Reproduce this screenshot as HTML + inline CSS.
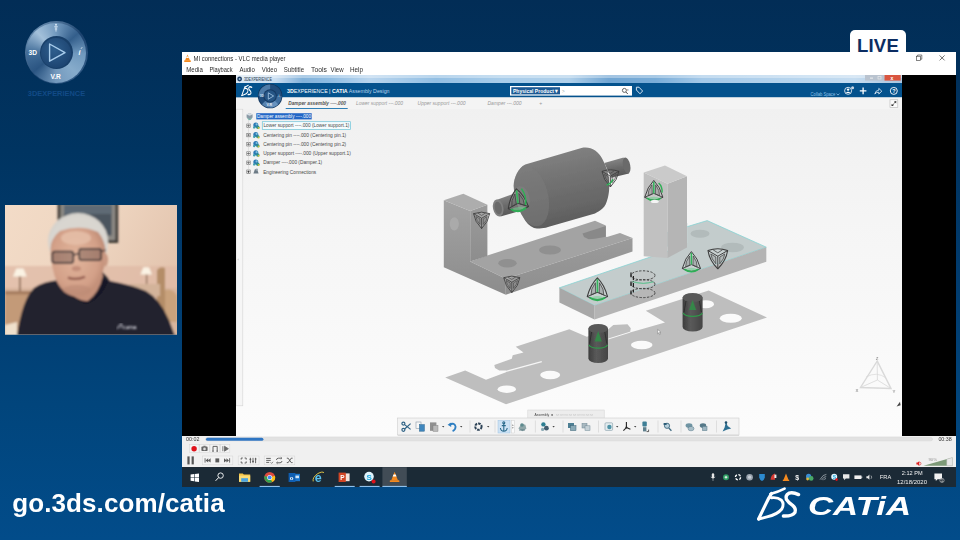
<!DOCTYPE html>
<html lang="en">
<head>
<meta charset="utf-8">
<title>CATIA Live - MI connections</title>
<style>
*{box-sizing:border-box;margin:0;padding:0}
html,body{width:960px;height:540px;overflow:hidden}
body{position:relative;font-family:"Liberation Sans",sans-serif;background:linear-gradient(180deg,#022d56 0%,#003461 28%,#013c6f 52%,#01457c 75%,#024c8a 100%)}
.abs{position:absolute}
#live{left:850px;top:30px;width:56px;height:34px;background:#fff;border-radius:5px 5px 0 0;color:#0c2d62;font-weight:bold;font-size:18.5px;line-height:32.4px;text-align:center;letter-spacing:0.2px}
#win{left:182px;top:52px;width:773.5px;height:435px;background:#000;overflow:hidden}
#url{left:12.2px;letter-spacing:0.1px;top:485.8px;color:#fff;font-weight:bold;font-size:26px;line-height:34px;white-space:nowrap}
</style>
</head>
<body>
<!-- LIVE badge -->
<div id="live" class="abs">LIVE</div>

<!-- VLC window -->
<div id="win" class="abs">
  <svg class="abs" style="left:0;top:0;filter:blur(0.3px)" width="774" height="23" viewBox="182 52 774 23" font-family="Liberation Sans, sans-serif">
    <rect x="182" y="52" width="774" height="23" fill="#fff"/>
    <path d="M187.5,54.4 l2.5,6 h-5 z" fill="#f58a1f"/><path d="M186.7,56.6 h1.6 l0.6,1.5 h-2.8 z" fill="#fff"/><rect x="184.2" y="60.2" width="6.6" height="1.7" rx="0.5" fill="#f58a1f"/>
    <text x="193.5" y="61" font-size="6.6" fill="#2c2c2c" textLength="92" lengthAdjust="spacingAndGlyphs">MI connections - VLC media player</text>
    <g font-size="6.5" fill="#2c2c2c">
      <text x="186.2" y="71.6" textLength="16.6" lengthAdjust="spacingAndGlyphs">Media</text>
      <text x="209.4" y="71.6" textLength="23.2" lengthAdjust="spacingAndGlyphs">Playback</text>
      <text x="239.4" y="71.6" textLength="15.4" lengthAdjust="spacingAndGlyphs">Audio</text>
      <text x="261.8" y="71.6" textLength="15.2" lengthAdjust="spacingAndGlyphs">Video</text>
      <text x="283.7" y="71.6" textLength="20.4" lengthAdjust="spacingAndGlyphs">Subtitle</text>
      <text x="311" y="71.6" textLength="15.8" lengthAdjust="spacingAndGlyphs">Tools</text>
      <text x="330.6" y="71.6" textLength="13" lengthAdjust="spacingAndGlyphs">View</text>
      <text x="350" y="71.6" textLength="13" lengthAdjust="spacingAndGlyphs">Help</text>
    </g>
    <rect x="916.4" y="56.2" width="4.2" height="4.2" fill="none" stroke="#333" stroke-width="0.6"/><path d="M917.6,56.2 v-1.2 h4.2 v4.2 h-1.2" fill="none" stroke="#333" stroke-width="0.6"/>
    <path d="M939.6,55.4 l5,5 M944.6,55.4 l-5,5" stroke="#333" stroke-width="0.7"/>
  </svg>
  <svg class="abs" style="left:54px;top:23px;filter:blur(0.4px)" width="666" height="361" viewBox="236 75 666 361" font-family="Liberation Sans, sans-serif">
    <defs>
      <linearGradient id="vbg" x1="0" y1="0" x2="0" y2="1"><stop offset="0" stop-color="#efefef"/><stop offset="0.4" stop-color="#f5f5f5"/><stop offset="1" stop-color="#fcfcfc"/></linearGradient>
      <linearGradient id="glass" x1="0" y1="0" x2="1" y2="0"><stop offset="0" stop-color="#dbe8f4"/><stop offset="0.06" stop-color="#c9ddf0"/><stop offset="0.1" stop-color="#82b2da"/><stop offset="0.14" stop-color="#8ebce2"/><stop offset="0.2" stop-color="#b9d5ee"/><stop offset="0.3" stop-color="#93bfe3"/><stop offset="0.4" stop-color="#a9cdea"/><stop offset="0.5" stop-color="#b0d0ea"/><stop offset="0.56" stop-color="#72a6d3"/><stop offset="0.63" stop-color="#7aadd8"/><stop offset="0.7" stop-color="#a5c9e8"/><stop offset="0.85" stop-color="#b9d6ee"/><stop offset="0.93" stop-color="#c5dcf0"/><stop offset="1" stop-color="#a9c5de"/></linearGradient>
      <linearGradient id="body" x1="0.35" y1="0" x2="0.6" y2="1"><stop offset="0" stop-color="#848484"/><stop offset="0.35" stop-color="#747474"/><stop offset="0.75" stop-color="#666"/><stop offset="1" stop-color="#595959"/></linearGradient>
      <linearGradient id="shaft" x1="0.3" y1="0" x2="0.5" y2="1"><stop offset="0" stop-color="#8a8a8a"/><stop offset="0.5" stop-color="#6c6c6c"/><stop offset="1" stop-color="#555"/></linearGradient>
      <linearGradient id="pin" x1="0" y1="0" x2="1" y2="0"><stop offset="0" stop-color="#3c3c3c"/><stop offset="0.4" stop-color="#5a5a5a"/><stop offset="1" stop-color="#444"/></linearGradient>
      <linearGradient id="lsA" x1="0" y1="0" x2="0" y2="1"><stop offset="0" stop-color="#a3a3a3"/><stop offset="1" stop-color="#8c8c8c"/></linearGradient><linearGradient id="lsB" x1="0" y1="0" x2="0" y2="1"><stop offset="0" stop-color="#9b9b9b"/><stop offset="1" stop-color="#8d8d8d"/></linearGradient><linearGradient id="lsC" x1="0" y1="0" x2="0" y2="1"><stop offset="0" stop-color="#9b9b9b"/><stop offset="1" stop-color="#8e8e8e"/></linearGradient><clipPath id="bodyclip"><path d="M513.7,185.7 C514,178 518,168 525.2,164.6 L581.4,147.9 C590,146 598,150 602.5,159.3 C606,166 608.5,172 608.7,178.7 C609.5,186 609.5,192 607.8,198 C606.5,203 605,206.5 602.5,208.6 C600,211 598,212 595,213.5 L548,227 C543,228.6 539,228.8 534,227.9 C529.5,226 526,222.5 523.4,217.4 C518,209 514,197 513.7,185.7 Z"/></clipPath><filter id="soft" x="-5%" y="-5%" width="110%" height="110%"><feGaussianBlur stdDeviation="0.45"/></filter>
    </defs>
    <!-- viewport -->
    <rect x="236" y="75" width="666" height="361" fill="url(#vbg)"/>
    <!-- scene -->
    <g filter="url(#soft)">
      <!-- ground shadow -->
      <polygon fill="#bebebe" points="445.2,377.5 465.2,370.5 486,379.7 506,372.2 506,370.4 499.3,370.4 495,368 494.3,365 511.8,358.7 512.7,355.3 523.5,352.5 515.7,346.7 569.3,329.2 586.8,336.7 607.5,330 613.3,325 627.5,324.2 630.8,328.3 630,332.5 665,322.5 645.8,310.8 708.7,290.5 767,317.5 506,404.2"/>
      <line x1="506" y1="371.3" x2="541.8" y2="361.6" stroke="#f6f6f6" stroke-width="1.2"/>
      <line x1="608.3" y1="339" x2="630" y2="332.2" stroke="#f6f6f6" stroke-width="1"/>
      <ellipse cx="506.8" cy="389.2" rx="9.2" ry="3.7" fill="#fafafa"/>
      <ellipse cx="550.2" cy="375" rx="10" ry="4.2" fill="#fafafa"/>
      <ellipse cx="641.7" cy="345" rx="10.8" ry="4.2" fill="#fafafa"/>
      <ellipse cx="730.8" cy="318.3" rx="11" ry="4.5" fill="#fafafa"/>
      <ellipse cx="705.8" cy="304.2" rx="8.2" ry="4" fill="#fafafa"/>

      <!-- lower support -->
      <polygon fill="#a3a3a3" points="470.2,261.5 505.8,278.7 632.5,237.9 620,232.9 607,237 605.8,236.7 605.8,225.6 595,220.7 487.4,255.5"/>
      <polygon fill="#898989" points="582.5,233.5 605.8,226 605.8,236.7 595,238.7 588.7,239.2 584,237"/>
      <polygon fill="url(#lsC)" points="505.8,278.7 632.5,237.9 632.5,251.5 505.8,294.8"/>
      <polygon fill="url(#lsA)" points="443.8,200.2 470.2,211 470.2,261.5 505.8,278.7 505.8,294.8 443.8,267.3"/>
      <polygon fill="url(#lsB)" points="470.2,211 487.4,204.8 487.4,256 470.2,261.5"/>
      <polygon fill="#adadad" points="443.8,200.2 463.3,193.8 487.4,204.8 470.2,211"/>
      <ellipse cx="454.3" cy="223.8" rx="4.6" ry="6.6" fill="#aaaaaa"/>
      <ellipse cx="507.5" cy="263.3" rx="9.2" ry="4.2" fill="#909090"/>
      <ellipse cx="550" cy="250" rx="11" ry="4.6" fill="#909090"/>

      <!-- damper -->
      <polygon fill="url(#shaft)" points="497,199.8 516.4,192.8 525.2,209.5 500.5,216.5"/>
      <ellipse cx="498.2" cy="208" rx="5.2" ry="8.6" fill="#808080" transform="rotate(-12 498.2 208)"/>
      <ellipse cx="498.2" cy="208" rx="3.6" ry="6.4" fill="#6b6b6b" transform="rotate(-12 498.2 208)"/>
      <polygon fill="url(#shaft)" points="604.3,162.9 623.6,157.6 628.9,173.4 611.3,177.8"/>
      <ellipse cx="626.6" cy="165.5" rx="3.6" ry="8.1" fill="#6a6a6a" transform="rotate(-12 626.6 165.5)"/>
      <path fill="url(#body)" d="M513.7,185.7 C514,178 518,168 525.2,164.6 L581.4,147.9 C590,146 598,150 602.5,159.3 C606,166 608.5,172 608.7,178.7 C609.5,186 609.5,192 607.8,198 C606.5,203 605,206.5 602.5,208.6 C600,211 598,212 595,213.5 L548,227 C543,228.6 539,228.8 534,227.9 C529.5,226 526,222.5 523.4,217.4 C518,209 514,197 513.7,185.7 Z"/>
      <g clip-path="url(#bodyclip)"><ellipse cx="531" cy="196" rx="17" ry="31" fill="#7c7c7c" opacity="0.5" transform="rotate(-14 531 196)"/><ellipse cx="522" cy="198" rx="7.5" ry="12" fill="#838383" opacity="0.5" transform="rotate(-14 522 198)"/></g>

      <!-- upper support -->
      <polygon fill="#c3cccc" stroke="#86d3d3" stroke-width="0.8" points="559.4,287.8 674,249 650,238 707.2,220.6 766.3,247.2 594.5,305.5"/>
      <polygon fill="#b4b4b4" points="594.5,305.5 766.3,247.2 766.3,261.8 594.5,319.5"/>
      <polygon fill="#a8a8a8" points="559.4,287.8 594.5,305.5 594.5,319.5 559.4,302.6"/>
      <ellipse cx="700" cy="233.7" rx="9.5" ry="4" fill="#b2bbbb"/>
      <ellipse cx="732.5" cy="247.5" rx="11.5" ry="4.8" fill="#b2bbbb"/>
      <polygon fill="#c9d9d8" opacity="0.7" points="667.5,230 687.5,223 687.5,243 667.5,250"/>
      <polygon fill="#c1c1c1" points="643.7,172.5 667.5,183.7 667.5,258 643.7,256.2"/>
      <polygon fill="#b5b5b5" points="667.5,183.7 687,176.2 687,247.5 667.5,258"/>
      <polygon fill="#cacaca" points="643.7,172.5 665,165.5 687,176.2 667.5,183.7"/>

      <!-- centering pins -->
      <path fill="url(#pin)" d="M682.6,297.6 L682.6,327 A10,4.6 0 0 0 702.6,327 L702.6,297.6 Z"/>
      <ellipse cx="692.6" cy="297.6" rx="10" ry="4.6" fill="#585858"/>
      <path d="M683,313 A10,4.4 0 0 0 702.4,313" fill="none" stroke="#2f9a4a" stroke-width="1.3"/>
      <path d="M692.6,300 l-3.6,10 h7.2 z" fill="#2f8f46" opacity="0.85"/>
      <path d="M686,301 l-2,11 M699.4,301 l2,11" stroke="#2a2a2a" stroke-width="0.8"/>
      <path fill="url(#pin)" d="M588.4,328.6 L588.4,358.4 A9.8,4.6 0 0 0 608,358.4 L608,328.6 Z"/>
      <ellipse cx="598.2" cy="328.6" rx="9.8" ry="4.6" fill="#585858"/>
      <path d="M588.8,345 A9.8,4.4 0 0 0 607.6,345" fill="none" stroke="#2f9a4a" stroke-width="1.3"/>
      <path d="M598.2,331 l-3.6,10.6 h7.2 z" fill="#2f8f46" opacity="0.85"/>
      <path d="M591.6,332 l-2,11.6 M604.8,332 l2,11.6" stroke="#2a2a2a" stroke-width="0.8"/>
    </g>
    <defs>
      <g id="mk">
        <path d="M0,-8 Q-5,-3 -7,5 Q0,9 7,5 Q5,-3 0,-8 Z" fill="#fff" fill-opacity="0.1" stroke="#3c3c3c" stroke-width="0.75" stroke-linejoin="round"/>
        <path d="M-7,5 L0,2 L7,5" fill="none" stroke="#3c3c3c" stroke-width="0.7"/>
        <path d="M-1.4,-4.6 Q-4.8,0 -4.4,3.8 L-1.2,2.4 Z M1.4,-4.6 Q4.8,0 4.4,3.8 L1.2,2.4 Z" fill="#555" fill-opacity="0.25" stroke="#444" stroke-width="0.55"/>
        <path d="M0,-7 L0,2" stroke="#35b35c" stroke-width="1.2"/>
        <ellipse cx="0" cy="6.2" rx="4.6" ry="1.7" fill="#6fd28e" fill-opacity="0.55"/>
        <path d="M-5.4,5.6 Q0,9.4 5.4,5.6" stroke="#2fae55" stroke-width="1.3" fill="none"/>
      </g>
      <g id="mk2">
        <path d="M-7,-5 Q0,-7.6 7,-5 Q6,2 0,8 Q-6,2 -7,-5 Z" fill="#fff" fill-opacity="0.1" stroke="#3c3c3c" stroke-width="0.75" stroke-linejoin="round"/>
        <path d="M-7,-5 L0,-1 L7,-5 M0,-1 L0,8" fill="none" stroke="#3c3c3c" stroke-width="0.7"/>
        <path d="M-5,-2.6 L-1.4,-0.4 L-1.4,4.4 Q-4.6,1 -5,-2.6 Z M5,-2.6 L1.4,-0.4 L1.4,4.4 Q4.6,1 5,-2.6 Z" fill="#555" fill-opacity="0.2" stroke="#444" stroke-width="0.55"/>
        <path d="M-3.4,-5.6 L0,-3.4 L3.4,-5.6" fill="none" stroke="#444" stroke-width="0.55"/>
      </g>
    </defs>
    <g filter="url(#soft)">
      <use href="#mk" transform="translate(517.6 200.4) scale(1.45) rotate(-6)"/>
      <path d="M521.4,188.6 q5.6,7.6 4,16.4" stroke="#2fae55" stroke-width="1.6" fill="none"/>
      <use href="#mk2" transform="translate(610.4 177.4) scale(1.2)"/>
      <path d="M606.6,185 q4,-1 6.4,-5.6" stroke="#2fae55" stroke-width="1.5" fill="none"/>
      <use href="#mk2" transform="translate(481.6 219.4) scale(1.15)"/>
      <use href="#mk2" transform="translate(511.8 283.4) scale(1.15)"/>
      <use href="#mk" transform="translate(653.8 190.8) scale(1.3)"/>
      <path d="M658.6,183 q4,3.6 3.4,9.6" stroke="#2fae55" stroke-width="1.4" fill="none"/>
      <ellipse cx="654.8" cy="201.4" rx="4" ry="1.7" fill="#f4f4f4"/>
      <use href="#mk" transform="translate(597.4 289.4) scale(1.45)"/>
      <use href="#mk" transform="translate(691.4 262) scale(1.3)"/>
      <use href="#mk2" transform="translate(717.8 257.6) scale(1.4)"/>
      <!-- ghost cylinder -->
      <path d="M631,275.4 v17.6 a12,4.6 0 0 0 24,0 v-17.6 a12,4.6 0 0 0 -24,0 z" fill="#bdbdbd" fill-opacity="0.35"/>
      <g fill="none" stroke="#3a3a3a" stroke-width="0.9" stroke-dasharray="2.2 1.5">
        <ellipse cx="643" cy="275.4" rx="12" ry="4.6"/><ellipse cx="643" cy="284.2" rx="12" ry="4.6"/><ellipse cx="643" cy="293" rx="12" ry="4.6"/>
      </g>
      <path d="M631,272.6 v4.6 M631,281.4 v4.6 M631,290.4 v4" stroke="#222" stroke-width="1.3"/>
      <path d="M632,281.6 q11,3.4 22,0" stroke="#55c08a" stroke-width="0.8" fill="none" opacity="0.8"/>
    </g>
      <path d="M633.4,276 v4 M633.4,283 v4 M633.4,289.6 v3" stroke="#222" stroke-width="1.2"/>
      <path d="M634,282 q9,3 19,0" stroke="#55c08a" stroke-width="0.8" fill="none" opacity="0.8"/>
    </g>
    <!-- inner title bar -->
    <rect x="236" y="75" width="666" height="8.2" fill="url(#glass)"/>
    <rect x="236" y="75" width="666" height="3" fill="#fff" opacity="0.35"/>
    <circle cx="239.6" cy="79" r="2.4" fill="#1d3f66"/><circle cx="239.6" cy="79" r="1" fill="#9fc0de"/>
    <text x="244" y="81" font-size="5.6" fill="#2b3b4c" textLength="27.8" lengthAdjust="spacingAndGlyphs">3DEXPERIENCE</text>
    <rect x="865" y="75" width="19.5" height="5.6" fill="#b9c3cf"/><rect x="870" y="77.6" width="3" height="1" fill="#eee"/><rect x="878" y="76.6" width="3" height="2.4" fill="none" stroke="#eee" stroke-width="0.6"/>
    <rect x="884.5" y="75" width="16.2" height="5.6" fill="#d9553f"/><text x="890.6" y="80" font-size="5" fill="#fff" font-weight="bold">x</text>
    <!-- blue header -->
    <rect x="236" y="83" width="666" height="14.6" fill="#04528d"/>
    <g fill="none" stroke="#fff" stroke-linecap="round" stroke-linejoin="round" transform="translate(241.6 85) scale(0.25 0.335) translate(-757.7 -487.7)">
      <path d="M798.6,494.6 Q793,492 789,493.2 Q785,495.4 786.4,499.4 Q788.4,502.6 792.6,505.4 Q796.4,508.6 795,512.4 Q792.4,516.4 783.4,516" stroke-width="4"/>
      <path d="M771.4,497.8 Q777.4,497 781.4,500.2 Q784.6,503.8 781.8,509 Q777.4,514.6 767,516.8 Q762,518 758.6,519" stroke-width="3.6"/>
      <path d="M758.6,519 Q762.4,511 766,503.6 Q768.4,498.4 771.6,493.4" stroke-width="4"/>
      <path d="M770.4,494 Q778,492 784.6,488.6" stroke-width="3.4"/>
    </g>
    <!-- header title -->
    <text x="287" y="93" font-size="6" fill="#fff" textLength="102.5" lengthAdjust="spacingAndGlyphs"><tspan font-weight="bold">3D</tspan>EXPERIENCE | <tspan font-weight="bold">CATIA</tspan> <tspan fill="#b7d6f0">Assembly Design</tspan></text>
    <!-- search -->
    <rect x="510" y="86" width="122" height="9.6" fill="#fff"/>
    <rect x="511.3" y="87.2" width="48.7" height="7.2" fill="#1d5a94"/>
    <text x="513" y="92.9" font-size="5.6" font-weight="bold" fill="#fff" textLength="45" lengthAdjust="spacingAndGlyphs">Physical Product ▾</text>
    <text x="562" y="92.8" font-size="4.6" fill="#9aa">&gt;</text>
    <circle cx="624.4" cy="90.4" r="2" fill="none" stroke="#555" stroke-width="0.9"/><path d="M625.9,92 L627.8,94" stroke="#555" stroke-width="1"/><text x="626.8" y="90.6" font-size="3.4" fill="#555">▾</text>
    <path d="M636.4,87.2 h2.6 l3.6,3.8 l-2.6,2.8 l-3.6,-3.8 z" fill="none" stroke="#e8f1fa" stroke-width="0.9" stroke-linejoin="round"/>
    <!-- header right -->
    <text x="810.6" y="96" font-size="5.2" fill="#8ec3ea" textLength="24.6" lengthAdjust="spacingAndGlyphs">Collab Space</text><path d="M836.6,93.6 l1.4,1.5 l1.4,-1.5" fill="none" stroke="#8ec3ea" stroke-width="0.8"/>
    <circle cx="848.1" cy="90.8" r="3.5" fill="none" stroke="#fff" stroke-width="0.8"/><circle cx="848.1" cy="89.6" r="1.2" fill="#fff"/><path d="M845.8,93 q2.3,-2.6 4.6,0 z" fill="#fff"/><circle cx="852.6" cy="87.8" r="1.5" fill="#c9d6e3"/>
    <path d="M863.1,87.6 v6.6 M859.8,90.9 h6.6" stroke="#fff" stroke-width="1.3"/>
    <path d="M874.8,94 q0.6,-3.6 4,-3.8 v-1.8 l3,2.8 l-3,2.8 v-1.8 q-2.4,-0.2 -4,1.8 z" fill="none" stroke="#e6f0fa" stroke-width="0.8" stroke-linejoin="round"/>
    <circle cx="893.8" cy="90.9" r="3.5" fill="none" stroke="#fff" stroke-width="0.9"/><text x="892.3" y="93" font-size="5.4" font-weight="bold" fill="#fff">?</text>
    <!-- tab bar -->
    <rect x="236" y="97.6" width="666" height="11.6" fill="#f2f2f2"/>
    <rect x="282" y="97.6" width="620" height="11.6" fill="#f4f4f4"/>
    <text x="288.2" y="105.2" font-size="5.6" font-style="italic" font-weight="bold" fill="#555" textLength="57.8" lengthAdjust="spacingAndGlyphs">Damper assembly ----.000</text>
    <rect x="285.7" y="108" width="62" height="1" fill="#2f7fb5"/>
    <g font-size="5.2" font-style="italic" fill="#9a9a9a">
      <text x="356" y="105.2" textLength="47" lengthAdjust="spacingAndGlyphs">Lower support ---.000</text>
      <text x="417.5" y="105.2" textLength="48" lengthAdjust="spacingAndGlyphs">Upper support ---.000</text>
      <text x="487.5" y="105.2" textLength="34" lengthAdjust="spacingAndGlyphs">Damper ---.000</text>
      <text x="539.2" y="105.2" font-style="normal">+</text>
    </g>
    <rect x="890" y="99.8" width="7.8" height="7.6" fill="#fcfcfc" stroke="#b5b5b5" stroke-width="0.6"/>
    <path d="M892,105.6 l1.8,-1.8 M895.8,101.6 l-1.8,1.8" stroke="#333" stroke-width="0.9"/><path d="M891.6,103.8 v2.2 h2.2 z M896.2,103.4 v-2.2 h-2.2 z" fill="#333"/>
    <!-- compass in header -->
    <circle cx="270.1" cy="96" r="12.3" fill="#12355c"/>
    <circle cx="270.1" cy="96" r="11.5" fill="#214d7c"/>
    <path d="M270.1,84.5 A11.5,11.5 0 0 0 258.6,96 L270.1,96 Z" fill="#6d9cc8" opacity="0.6"/>
    <path d="M270.1,107.5 A11.5,11.5 0 0 0 281.6,96 L270.1,96 Z" fill="#5f90bf" opacity="0.5"/>
    <path d="M262,104.2 A11.5,11.5 0 0 0 278.2,104.2 L270.1,96 Z" fill="#86b1d8" opacity="0.55"/>
    <circle cx="270.1" cy="96" r="6.8" fill="#153a63"/>
    <circle cx="270.1" cy="96" r="5.8" fill="#265585"/>
    <path d="M268.3,92.8 L273.6,96 L268.3,99.2 Z" fill="none" stroke="#a9cbe8" stroke-width="0.8" stroke-linejoin="round"/>
    <text x="266.5" y="106.2" font-size="3.6" font-weight="bold" fill="#e3eef8">V.R</text>
    <text x="259.8" y="97.2" font-size="3.2" font-weight="bold" fill="#d5e6f5">3D</text>
    <text x="278.4" y="97.2" font-size="3.2" font-weight="bold" fill="#d5e6f5">i</text>
    <!-- tree -->
    <g font-size="5.4" fill="#484848">
      <rect x="256.3" y="113.2" width="55.4" height="6.2" fill="#2367c6"/>
      <text x="257" y="118.3" fill="#fff" textLength="54" lengthAdjust="spacingAndGlyphs">Damper assembly ----.000</text>
      <rect x="262.3" y="121.7" width="88.2" height="7.7" fill="#f4fbfd" stroke="#6cc3d8" stroke-width="0.7"/>
      <text x="263.4" y="127.4" textLength="86" lengthAdjust="spacingAndGlyphs">Lower support ----.000 (Lower support.1)</text>
      <text x="263.2" y="136.9" textLength="83" lengthAdjust="spacingAndGlyphs">Centering pin ----.000 (Centering pin.1)</text>
      <text x="263.2" y="146" textLength="83" lengthAdjust="spacingAndGlyphs">Centering pin ----.000 (Centering pin.2)</text>
      <text x="263.2" y="155.2" textLength="87.6" lengthAdjust="spacingAndGlyphs">Upper support ----.000 (Upper support.1)</text>
      <text x="263.2" y="164.3" textLength="59" lengthAdjust="spacingAndGlyphs">Damper ----.000 (Damper.1)</text>
      <text x="263.2" y="173.5" textLength="53" lengthAdjust="spacingAndGlyphs">Engineering Connections</text>
    </g>
    <!-- tree icons -->
    <g>
      <path d="M246.6,114.4 l3,-1.4 l3,1.4 v3.2 l-3,1.6 l-3,-1.6 z" fill="#8a9aa6"/><path d="M246.6,114.4 l3,1.4 l3,-1.4 l-3,-1.4 z" fill="#d5dde3"/><path d="M247.6,118.6 l2,1 l2,-1" stroke="#3b9b8a" stroke-width="0.9" fill="none"/>
    </g>
    <g id="ti">
      <rect x="246.8" y="124" width="3.4" height="3.4" fill="#fff" stroke="#666" stroke-width="0.6"/><path d="M247.3,125.7 h2.4 M248.5,124.5 v2.4" stroke="#222" stroke-width="0.7"/>
      <circle cx="255.8" cy="125" r="2.5" fill="#2b78b4"/><circle cx="256.6" cy="124.4" r="1.1" fill="#7fc0dc"/><circle cx="257.8" cy="127.2" r="1.7" fill="#2f8f8a"/><circle cx="258.6" cy="128" r="1" fill="#c9c23a"/><circle cx="254.2" cy="127.4" r="1.2" fill="#3f9fb0"/>
    </g>
    <use href="#ti" y="9.4"/><use href="#ti" y="18.6"/><use href="#ti" y="27.8"/><use href="#ti" y="37"/>
    <g>
      <rect x="246.8" y="170" width="3.4" height="3.4" fill="#fff" stroke="#666" stroke-width="0.6"/><path d="M247.3,171.7 h2.4 M248.5,170.5 v2.4" stroke="#222" stroke-width="0.7"/>
      <path d="M253.4,173.6 l1.6,-4.6 l2.4,1 l1.2,3.4 z" fill="#6d7b86"/><circle cx="256.8" cy="169.6" r="1.2" fill="#9aa8b3"/>
    </g>
    <path d="M248.5,120 V171" stroke="#c8c8c8" stroke-width="0.4"/>
    <!-- left collapse handle -->
    <rect x="236" y="109.2" width="6.8" height="296.6" fill="#f6f6f6" stroke="#d4d4d4" stroke-width="0.6"/>
    <text x="237.6" y="261" font-size="4.4" fill="#aaa">‹</text>
    <!-- robot axes -->
    <g stroke="#d6d6d6" stroke-width="1.4" fill="none" opacity="0.9">
      <path d="M877.2,361 L860.5,387.5 L891,388.5 Z"/><path d="M877.2,361 L877.4,380 L860.5,387.5 M877.4,380 L891,388.5" stroke-width="0.8"/>
      <path d="M866,377 q11,-6 20,1" stroke-width="0.7"/>
    </g>
    <g font-size="4.4" fill="#707070"><text x="875.8" y="359.8">Z</text><text x="855.4" y="391.8">X</text><text x="892.6" y="392.8">Y</text></g>
    <path d="M896.6,406.4 l3.4,-4.6 l0.6,3.4 z" fill="#444"/>
    <path d="M657.6,329.4 l0,4.4 l1.1,-1 l0.9,1.8 l0.8,-0.4 l-0.9,-1.7 l1.5,-0.1 z" fill="#fff" stroke="#777" stroke-width="0.5"/>
    <!-- bottom toolbar -->
    <rect x="527.8" y="410" width="76.4" height="8.2" fill="#ededed" stroke="#d0d0d0" stroke-width="0.5"/>
    <text x="534.6" y="416" font-size="4" fill="#444" textLength="14.5" lengthAdjust="spacingAndGlyphs">Assembly</text>
    <text x="551" y="416.2" font-size="3.6" fill="#444">●</text><text x="555.6" y="416.2" font-size="3.6" fill="#8f8f8f" textLength="38" lengthAdjust="spacingAndGlyphs">○○○○○○○○○</text>
    <rect x="397.5" y="418" width="341.5" height="17" fill="#f3f3f3" stroke="#cdcdcd" stroke-width="0.6"/>
    <rect x="398" y="434.8" width="341" height="1.2" fill="#dadada"/>
    <g>
      <!-- separators -->
      <g stroke="#d0d0d0" stroke-width="0.6"><path d="M470,420.5 v12 M495,420.5 v12 M535.4,420.5 v12 M563,420.5 v12 M598.5,420.5 v12 M658,420.5 v12 M681,420.5 v12 M716.5,420.5 v12"/></g>
      <!-- dropdown arrows -->
      <g fill="#444"><path d="M442,426 h2.4 l-1.2,1.4 z M460,426 h2.4 l-1.2,1.4 z M487,426 h2.4 l-1.2,1.4 z M552.4,426 h2.4 l-1.2,1.4 z M616,426 h2.4 l-1.2,1.4 z M634,426 h2.4 l-1.2,1.4 z"/></g>
      <!-- scissors -->
      <g stroke="#2f6386" stroke-width="1.2" fill="none"><path d="M404.6,424.6 L410.6,429.4 M404.6,429 L410.6,423.6"/><circle cx="403.4" cy="423.6" r="1.5"/><circle cx="403.4" cy="429.8" r="1.5"/></g>
      <!-- copy -->
      <rect x="416" y="422" width="5" height="6.4" fill="#f8f8f8" stroke="#8a9aa8" stroke-width="0.6"/><rect x="419.4" y="424.6" width="5" height="6.6" fill="#3f86bd" stroke="#2c668f" stroke-width="0.5"/>
      <!-- paste -->
      <rect x="430" y="422.4" width="6.4" height="8.4" fill="#8f8f8f"/><rect x="433" y="425.4" width="5" height="6" fill="#b9b9b9" stroke="#777" stroke-width="0.4"/>
      <!-- undo -->
      <path d="M449.6,424.6 q5,-2.4 6,2 q0,3.4 -3,4.6" fill="none" stroke="#2f7fc2" stroke-width="1.8"/><path d="M447.6,424.8 l3.6,-2.4 v4.6 z" fill="#2f7fc2"/>
      <!-- update -->
      <circle cx="478.4" cy="426.6" r="3.2" fill="none" stroke="#2d4256" stroke-width="2" stroke-dasharray="2.6 1"/>
      <!-- anchor (active) -->
      <rect x="498" y="420.4" width="12" height="12.6" fill="#cde2f4" stroke="#9ec4e4" stroke-width="0.5"/>
      <g stroke="#2a6a8c" stroke-width="1.1" fill="none"><path d="M503.8,423.6 v7.4 M500.4,428 q0.4,3.2 3.4,3.2 q3,0 3.4,-3.2 M501.8,425.6 h4"/><circle cx="503.8" cy="422.8" r="1"/></g>
      <rect x="511.4" y="420.4" width="2.8" height="12.6" fill="#fafafa" stroke="#c8c8c8" stroke-width="0.4"/><path d="M512,425.6 h1.6 l-0.8,-1 z M512,427.6 h1.6 l-0.8,1 z" fill="#333"/>
      <!-- misc icons -->
      <g>
        <path d="M518.4,428.4 l3,-4.6 l4,1 l1,4 l-4,2.4 z" fill="#8fa6a8"/><circle cx="522" cy="425" r="1.8" fill="#5d8a8e"/><path d="M519,430 h6" stroke="#4b6f78" stroke-width="0.8"/>
        <circle cx="543.4" cy="424.4" r="2.2" fill="#2d7f92"/><circle cx="546.4" cy="428.2" r="2.4" fill="#435d6e"/><circle cx="542.6" cy="429.4" r="1.6" fill="#8aa9b4"/>
        <rect x="568" y="423" width="6" height="5" fill="#4d7f94"/><rect x="570.4" y="425.6" width="5.6" height="5" fill="#89a9b6" stroke="#3f6678" stroke-width="0.5"/>
        <rect x="582" y="423.4" width="5" height="4.6" fill="#a9b9c1" stroke="#6f8794" stroke-width="0.5"/><rect x="585" y="425.8" width="5" height="4.6" fill="#c5d1d7" stroke="#6f8794" stroke-width="0.5"/>
        <rect x="605" y="422.8" width="7.6" height="7.6" rx="1" fill="#e3ecef" stroke="#7f98a4" stroke-width="0.6"/><circle cx="609.4" cy="427" r="2.2" fill="#4f93a6"/>
        <path d="M626.4,422 v5.6 l-3,3 M626.4,427.6 l4,1.6" stroke="#222" stroke-width="1.1" fill="none"/><circle cx="626.4" cy="427.6" r="1" fill="#222"/>
        <rect x="642.4" y="421.6" width="4.4" height="5" rx="1" fill="#3e7f96"/><rect x="643" y="427.2" width="3.4" height="4.2" fill="#5f7f8c"/><path d="M648.6,429.6 v2 h-2" stroke="#222" stroke-width="0.7" fill="none"/>
        <circle cx="667" cy="425.8" r="2.6" fill="#b7d0dc" stroke="#3f6a80" stroke-width="0.9"/><path d="M668.8,428 l2.6,2.8" stroke="#3f6a80" stroke-width="1.3"/><rect x="663.6" y="423" width="3" height="2" fill="#2d5e78"/>
        <ellipse cx="689" cy="425.6" rx="3.4" ry="2.4" fill="#6f94a3"/><ellipse cx="691" cy="428.6" rx="3" ry="2.2" fill="#a8bec8" stroke="#557888" stroke-width="0.5"/>
        <ellipse cx="703" cy="425.6" rx="3.2" ry="2.4" fill="#557888"/><rect x="702.4" y="426.4" width="4.6" height="4.2" fill="#9fb6c1" stroke="#557888" stroke-width="0.5"/>
        <path d="M726,421.6 l1.6,4.4 l3.6,2.6 l-4,0.8 l-4.6,2 l2,-4 z" fill="#2c6f91"/><circle cx="726" cy="422.6" r="1.3" fill="#1f4f6b"/>
      </g>
    </g>
  </svg>
  <svg class="abs" style="left:0;top:384px;filter:blur(0.35px)" width="774" height="51" viewBox="182 436 774 51" font-family="Liberation Sans, sans-serif">
    <rect x="182" y="436" width="774" height="31.2" fill="#f0f0f0"/>
    <!-- seek bar -->
    <text x="186" y="441.4" font-size="4.8" fill="#333" textLength="13.4" lengthAdjust="spacingAndGlyphs">00:02</text>
    <rect x="205.5" y="437.6" width="727" height="3.2" rx="1.6" fill="#e2e2e2" stroke="#cfcfcf" stroke-width="0.4"/>
    <rect x="206" y="437.8" width="57.4" height="3" rx="1.5" fill="#2f76c3"/>
    <text x="938.4" y="441.4" font-size="4.8" fill="#333" textLength="13.4" lengthAdjust="spacingAndGlyphs">00:38</text>
    <!-- row 1 -->
    <g fill="#f3f3f3" stroke="#d4d4d4" stroke-width="0.5">
      <rect x="189.4" y="444.6" width="9.6" height="8"/><rect x="199.6" y="444.6" width="9.8" height="8"/><rect x="210" y="444.6" width="9.8" height="8"/><rect x="220.4" y="444.6" width="9.4" height="8"/>
    </g>
    <circle cx="194.1" cy="448.7" r="2.7" fill="#e0121a"/>
    <rect x="201.4" y="446.6" width="6.2" height="4.4" rx="0.8" fill="#666"/><circle cx="204.5" cy="448.9" r="1.3" fill="#ddd"/><rect x="203.4" y="445.8" width="2.2" height="1" fill="#666"/>
    <path d="M213,451.2 v-4.8 h4.2 v4.8" fill="none" stroke="#555" stroke-width="0.9"/><path d="M212.2,451.2 h1.6 M216.4,451.2 h1.6" stroke="#555" stroke-width="0.9"/>
    <path d="M222.8,446.2 v5 M224.4,446.2 l4,2.5 l-4,2.5 z" fill="#666" stroke="#666" stroke-width="0.8"/>
    <!-- row 2 -->
    <rect x="187.4" y="456.4" width="2.2" height="8" fill="#555"/><rect x="191.6" y="456.4" width="2.2" height="8" fill="#555"/>
    <g fill="#f3f3f3" stroke="#d4d4d4" stroke-width="0.5">
      <rect x="202.4" y="456" width="30.4" height="8.8"/><rect x="238.2" y="456" width="20.8" height="8.8"/><rect x="264.2" y="456" width="30.6" height="8.8"/>
    </g>
    <g fill="#5a5a5a" stroke="none">
      <rect x="204.6" y="458.2" width="0.9" height="4.4"/><path d="M208.2,458.2 v4.4 l-2.6,-2.2 z M210.6,458.2 v4.4 l-2.6,-2.2 z"/>
      <rect x="215.4" y="458.4" width="3.8" height="4"/>
      <rect x="229.2" y="458.2" width="0.9" height="4.4"/><path d="M224,458.2 v4.4 l2.6,-2.2 z M226.4,458.2 v4.4 l2.6,-2.2 z"/>
    </g>
    <g fill="none" stroke="#555" stroke-width="0.9">
      <path d="M241.2,459.6 v-1.6 h1.6 M244.6,458 h1.6 v1.6 M246.2,461.4 v1.6 h-1.6 M242.8,463 h-1.6 v-1.6"/>
      <path d="M250.4,457.8 v5.4 M253,457.8 v5.4 M255.6,457.8 v5.4"/><path d="M249.6,459.4 h1.6 M252.2,461.4 h1.6 M254.8,459 h1.6" stroke-width="1.2"/>
      <path d="M266.2,458.4 h4.6 M266.2,460.4 h4.6 M266.2,462.4 h3"/><path d="M270.6,462.4 l1,1 l1.4,-1.6" stroke-width="0.7"/>
      <path d="M276.4,460 q0.2,-1.8 2,-1.8 h3 M282,461 q-0.2,1.8 -2,1.8 h-3"/><path d="M280.8,457.2 l1.2,1 l-1.2,1 M277.6,461.8 l-1.2,1 l1.2,1" stroke-width="0.7"/>
      <path d="M286.8,458.2 h1.4 l3,4.4 h1.4 M286.8,462.6 h1.4 l3,-4.4 h1.4"/>
    </g>
    <!-- volume -->
    <path d="M916.4,462.6 h1.2 l1.6,-1.4 v4.8 l-1.6,-1.4 h-1.2 z" fill="#d22"/><circle cx="919.6" cy="463.6" r="1.4" fill="none" stroke="#d22" stroke-width="0.6"/>
    <path d="M923.5,465.8 L952.4,457.6 V465.8 Z" fill="#7d9a78"/>
    <path d="M946.8,459.2 L952.4,457.6 V465.8 H946.8 Z" fill="#e8e8e8" stroke="#bbb" stroke-width="0.4"/>
    <text x="928.4" y="461.2" font-size="4.4" fill="#999">90%</text>
    <!-- taskbar -->
    <rect x="182" y="467.2" width="774" height="19.8" fill="#1b2a36"/>
    <rect x="382.4" y="467.2" width="24.4" height="19.8" fill="#414c56"/>
    <g fill="#8fc0ea"><rect x="259.6" y="485.9" width="20.2" height="1.1"/><rect x="334.7" y="485.9" width="20" height="1.1"/><rect x="359.6" y="485.9" width="20" height="1.1"/><rect x="382.4" y="485.9" width="24.4" height="1.1"/></g>
    <!-- start -->
    <g fill="#fff"><path d="M190.6,474.6 l3.6,-0.5 v3.3 h-3.6 z M194.8,474 l4.2,-0.6 v4 h-4.2 z M190.6,478 h3.6 v3.3 l-3.6,-0.5 z M194.8,478 h4.2 v4 l-4.2,-0.6 z"/></g>
    <circle cx="220.6" cy="475.6" r="2.7" fill="none" stroke="#fff" stroke-width="0.9"/><path d="M218.6,477.6 l-3,3.2" stroke="#fff" stroke-width="1"/>
    <!-- explorer -->
    <path d="M239,473.4 h3.8 l1,1 h6.4 v7.4 h-11.2 z" fill="#f5c445"/><rect x="239" y="475.6" width="11.2" height="6.2" fill="#fbdc76"/><rect x="241.2" y="478.2" width="6.8" height="3.6" fill="#4aa3df"/>
    <!-- chrome -->
    <circle cx="269.7" cy="477.4" r="5.4" fill="#dd4b3e"/><path d="M269.7,477.4 L265,480.1 A5.4,5.4 0 0 0 272.4,482.1 Z" fill="#32a350"/><path d="M269.7,477.4 L265,480.1 A5.4,5.4 0 0 1 264.4,476 Z" fill="#32a350"/><path d="M269.7,477.4 L272.4,482.1 A5.4,5.4 0 0 0 274.9,475.8 Z" fill="#fbc116"/><circle cx="269.7" cy="477.4" r="2.5" fill="#fff"/><circle cx="269.7" cy="477.4" r="1.9" fill="#4688f1"/>
    <!-- outlook -->
    <rect x="293.4" y="473.8" width="6.6" height="7.4" fill="#1a73c9"/><rect x="295" y="475.6" width="4" height="2.6" fill="#cfe3f7"/><rect x="288.6" y="473" width="6.8" height="9" fill="#0f5db0"/><text x="289.8" y="480" font-size="6" font-weight="bold" fill="#fff">o</text>
    <!-- IE -->
    <text x="314.8" y="481.6" font-size="12.5" font-weight="bold" fill="#58c0ee">e</text><path d="M313.2,481.4 q-1,-4 4.6,-7.8 q4.8,-2.6 6.2,-0.8" fill="none" stroke="#f1d045" stroke-width="0.9"/>
    <!-- ppt -->
    <rect x="343.4" y="473.4" width="6.2" height="7.8" fill="#f4e3dc"/><rect x="338.6" y="472.6" width="7.2" height="9.4" fill="#d14524"/><text x="340.2" y="479.8" font-size="6.4" font-weight="bold" fill="#fff">P</text>
    <!-- skype -->
    <circle cx="369" cy="476.6" r="4.8" fill="#dff3fc"/><text x="366.4" y="479.6" font-size="8" font-weight="bold" fill="#1ba8e0">S</text><circle cx="373.6" cy="481.4" r="2" fill="#e0121a"/>
    <!-- vlc -->
    <path d="M394.6,471.8 l3.4,8.6 h-6.8 z" fill="#f58a1f"/><path d="M393.5,474.6 h2.2 l0.8,2 h-3.8 z" fill="#fff"/><rect x="389.8" y="480.2" width="9.6" height="1.8" rx="0.6" fill="#f58a1f"/>
    <!-- tray -->
    <g>
      <rect x="711.8" y="473.2" width="2.4" height="5" rx="1.2" fill="#e8e8e8"/><path d="M710.8,477 q2.2,3 4.4,0 M713,479.2 v1.6" stroke="#e8e8e8" stroke-width="0.6" fill="none"/>
      <circle cx="726" cy="477.2" r="3" fill="#2e9d63"/><path d="M724.6,477.2 h2.8 M726,475.8 v2.8" stroke="#fff" stroke-width="0.9"/>
      <circle cx="738" cy="477.2" r="2.6" fill="none" stroke="#fff" stroke-width="1.3" stroke-dasharray="2.6 1.5"/>
      <circle cx="749.6" cy="477.2" r="3.3" fill="#9aa3ad"/><circle cx="749.6" cy="477.2" r="1.6" fill="#c7ced6"/>
      <path d="M759.2,474 h5.6 v3.6 q-0.6,2.6 -2.8,3.4 q-2.2,-0.8 -2.8,-3.4 z" fill="#2c8bd0"/>
      <path d="M770.6,479.8 q0.4,-5.4 4.4,-6.2 v6.2 z" fill="#d63a33"/><rect x="774.4" y="474.6" width="2" height="3.4" fill="#e8e8e8"/>
      <path d="M786,473.6 l2.6,6.4 h-5.2 z" fill="#f58a1f"/><rect x="782.8" y="479.8" width="6.4" height="1.2" fill="#f58a1f"/>
      <text x="795.2" y="480" font-size="7" font-weight="bold" fill="#f2f2f2">$</text>
      <circle cx="808.6" cy="476.4" r="2.6" fill="#3a8fd6"/><circle cx="811.2" cy="478.4" r="2.3" fill="#48a866"/><circle cx="807.6" cy="479" r="1.4" fill="#e1b93f"/>
      <path d="M820,479.6 q3.2,-5.6 6.4,-5.2 M821.6,480 q2.2,-3.6 4.6,-3.4 M823.4,480.2 q1.2,-1.8 2.6,-1.6" stroke="#cfd5da" stroke-width="0.6" fill="none"/>
      <circle cx="834.2" cy="476.8" r="3" fill="#dff3fc"/><text x="832.7" y="478.8" font-size="5" font-weight="bold" fill="#1ba8e0">S</text><circle cx="836.6" cy="479.6" r="1.3" fill="#e0121a"/>
      <path d="M843,474.2 h6.4 v4.4 h-3.6 l-1.6,1.6 v-1.6 h-1.2 z" fill="#e8e8e8"/>
      <rect x="854.4" y="475.4" width="7" height="3.6" fill="#f0f0f0"/><rect x="861.4" y="476.4" width="0.8" height="1.6" fill="#f0f0f0"/>
      <path d="M866.4,476.2 h1.4 l1.6,-1.6 v5.2 l-1.6,-1.6 h-1.4 z" fill="#e8e8e8"/><path d="M871,475.6 q1.4,1.6 0,3.2" stroke="#e8e8e8" stroke-width="0.6" fill="none"/>
      <text x="879.8" y="479.2" font-size="5.4" fill="#f2f2f2" textLength="11.4" lengthAdjust="spacingAndGlyphs">FRA</text>
      <text x="901.8" y="474.6" font-size="5.6" fill="#f2f2f2" textLength="20.8" lengthAdjust="spacingAndGlyphs">2:12 PM</text>
      <text x="897" y="483.6" font-size="5.6" fill="#f2f2f2" textLength="30" lengthAdjust="spacingAndGlyphs">12/18/2020</text>
      <path d="M934.4,473.6 h7.6 v5.6 h-4.4 l-1.8,1.8 v-1.8 h-1.4 z" fill="#f2f2f2"/><circle cx="942" cy="480.4" r="2.1" fill="#1d2831" stroke="#f2f2f2" stroke-width="0.5"/><text x="941.1" y="481.8" font-size="3.6" fill="#fff">1</text>
    </g>
  </svg>
</div>

<div id="url" class="abs">go.3ds.com/catia</div>
<!-- CATIA logo -->
<svg class="abs" style="left:750px;top:484px" width="170" height="40" viewBox="750 484 170 40" font-family="Liberation Sans, sans-serif">
  <g fill="none" stroke="#fff" stroke-linecap="round" stroke-linejoin="round">
    <path d="M798.6,494.6 Q793,492 789,493.2 Q785,495.4 786.4,499.4 Q788.4,502.6 792.6,505.4 Q796.4,508.6 795,512.4 Q792.4,516.4 783.4,516" stroke-width="3.4"/>
    <path d="M771.4,497.8 Q777.4,497 781.4,500.2 Q784.6,503.8 781.8,509 Q777.4,514.6 767,516.8 Q762,518 758.6,519" stroke-width="2.9"/>
    <path d="M758.6,519 Q762.4,511 766,503.6 Q768.4,498.4 771.6,493.4" stroke-width="3.2"/>
    <path d="M770.4,494 Q778,492 784.6,488.6" stroke-width="2.6"/>
  </g>
  <text x="808" y="514.9" font-size="25" font-weight="bold" font-style="italic" fill="#fff" textLength="103" lengthAdjust="spacingAndGlyphs">CATiA</text>
</svg>
<!-- compass -->
<div class="abs" style="left:24.6px;top:21.4px;width:63px;height:63px;border-radius:50%;background:linear-gradient(135deg,#7c9fc0,#1b426e 55%,#3b648f)"></div>
<div class="abs" style="left:25.8px;top:22.6px;width:60.6px;height:60.6px;border-radius:50%;background:conic-gradient(from 0deg,#7299be 0deg,#335e8b 48deg,#7099be 92deg,#86abcb 135deg,#7499bd 180deg,#2b5582 230deg,#446f9a 272deg,#a3c0da 318deg,#7299be 360deg)"></div>
<div class="abs" style="left:39.6px;top:36.4px;width:33px;height:33px;border-radius:50%;background:#183f69"></div>
<div class="abs" style="left:41px;top:37.8px;width:30.2px;height:30.2px;border-radius:50%;background:radial-gradient(circle at 45% 40%,#2f5f8e,#1d4471 75%)"></div>
<svg class="abs" style="left:20px;top:16px" width="76" height="86" viewBox="20 16 76 86" font-family="Liberation Sans, sans-serif">
  <path d="M49.6,44 L65,52.6 L49.6,61.2 Z" fill="none" stroke="#a9cdec" stroke-width="1.4" stroke-linejoin="round"/>
  <text x="28.6" y="55" font-size="6.6" font-weight="bold" fill="#fff">3D</text>
  <text x="50.4" y="78.8" font-size="6.6" font-weight="bold" fill="#fff">V.R</text>
  <text x="78.6" y="55" font-size="7" font-weight="bold" font-style="italic" fill="#fff">i</text><path d="M81,48.8 l1.2,-1.6" stroke="#fff" stroke-width="0.7"/>
  <circle cx="56" cy="24.8" r="1" fill="#d8e8f6"/><path d="M54.2,26.8 h3.6 M56,26.6 v5 M54.8,29 h2.4" stroke="#d8e8f6" stroke-width="0.9" fill="none"/>
  <text x="27.8" y="96.2" font-size="7.4" font-weight="bold" fill="#124a86" textLength="57.4" lengthAdjust="spacingAndGlyphs">3DEXPERIENCE</text>
</svg>
<!-- webcam -->
<svg class="abs" style="left:5px;top:205px" width="172" height="129.5" viewBox="5 205 172 129.5" font-family="Liberation Sans, sans-serif">
  <defs>
    <filter id="wb" x="-5%" y="-5%" width="110%" height="110%"><feGaussianBlur stdDeviation="0.9"/></filter>
    <linearGradient id="wall" x1="0" y1="0" x2="1" y2="0.4"><stop offset="0" stop-color="#f3dcc8"/><stop offset="0.55" stop-color="#eed5c0"/><stop offset="1" stop-color="#e3c4ae"/></linearGradient>
    <radialGradient id="face" cx="0.45" cy="0.45" r="0.6"><stop offset="0" stop-color="#e2b59c"/><stop offset="0.7" stop-color="#d3a088"/><stop offset="1" stop-color="#b98670"/></radialGradient>
    <clipPath id="wc"><rect x="5" y="205" width="172" height="129.5"/></clipPath>
  </defs>
  <g clip-path="url(#wc)">
  <rect x="0" y="200" width="182" height="140" fill="url(#wall)"/>
  <g filter="url(#wb)">
    <!-- lower wall / bed -->
    <rect x="0" y="266" width="182" height="24" fill="#dfb9a6" opacity="0.75"/>
    <rect x="0" y="288" width="182" height="50" fill="#d8b59e"/>
    <!-- picture -->
    <rect x="57.6" y="202" width="60.6" height="41" fill="#3f3a35"/>
    <rect x="60.4" y="204" width="55" height="36.2" fill="#8d8a84"/>
    <rect x="64" y="205" width="47.6" height="30.6" fill="#4c555e"/>
    <rect x="64" y="205" width="47.6" height="9" fill="#5e6a75"/>
    <!-- left lamp & table -->
    <path d="M13,276.4 l3.4,-8 h7 l3.4,8 z" fill="#fbf3e4"/><rect x="19.2" y="276.4" width="1.4" height="15" fill="#7a5a44"/>
    <path d="M5,293 h24 l-2,10 v32 h-22 z" fill="#c39a78"/><rect x="5" y="291" width="26" height="3.4" fill="#a67d5e"/>
    <path d="M5,325 l12,-3 v14 h-12 z" fill="#efe0cc"/>
    <!-- right lamp & chair -->
    <path d="M140.4,274.6 l3,-7.4 h5.6 l3,7.4 z" fill="#fbf3e4"/><rect x="146" y="274.6" width="1.2" height="12" fill="#7a5a44"/>
    <path d="M157,270 q3,-4 8,-2 v50 h-8 z" fill="#b48d68"/><path d="M165,290 q8,-2 12,6 v26 h-12 z" fill="#c9a27c"/>
    <rect x="130" y="284" width="30" height="12" fill="#d3b39a"/>
    <!-- shirt -->
    <path d="M17,336 Q22,300 34,288 Q44,281 60,280 L96,269 Q104,271 110,281 Q132,285 146,291 Q160,299 169,320 L175,336 Z" fill="#20202e"/>
    <path d="M60,284 Q70,300 86,304 Q100,300 108,282 L100,276 Q86,296 70,282 Z" fill="#191926"/>
    <!-- neck -->
    <path d="M62,282 Q74,302 88,301 Q99,293 103,276 L100,262 L60,268 Z" fill="#c4917a"/>
    <!-- head -->
    <ellipse cx="78" cy="241" rx="30" ry="28" fill="#d6d3cd"/>
    <path d="M50.6,250 Q50,236 60,229 Q78,222 97,228 Q106,236 105.4,250 Q106,268 99,281 Q90,296 78,297 Q64,296 57,282 Q51,268 50.6,250 Z" fill="url(#face)"/>
    <path d="M49,252 Q47,226 70,217 Q92,213 104,230 Q109,240 107,256 Q105,240 98,232 Q80,224 60,231 Q51,238 49,252 Z" fill="#d9d6d0"/>
    <ellipse cx="105.4" cy="260" rx="2.6" ry="6.4" fill="#c99882"/>
    <ellipse cx="76" cy="238" rx="15" ry="7" fill="#e6c0aa" opacity="0.8"/>
    <!-- glasses -->
    <rect x="52.4" y="251.6" width="21" height="11.4" rx="2.4" fill="#5d4a46" fill-opacity="0.38" stroke="#2e2c30" stroke-width="1.5"/>
    <rect x="79.2" y="248.8" width="22" height="11.4" rx="2.4" fill="#5d4a46" fill-opacity="0.38" stroke="#2e2c30" stroke-width="1.5"/>
    <path d="M73.4,255.6 q3,-2.4 5.8,-2" stroke="#2e2c30" stroke-width="1.3" fill="none"/><path d="M101.2,251.4 l4.6,-1.4" stroke="#2e2c30" stroke-width="1.2"/>
    <!-- mouth / nose shade -->
    <ellipse cx="76.4" cy="268.6" rx="4.6" ry="2.6" fill="#c48f7a"/>
    <path d="M68,277.6 q8,3 17,-0.8" stroke="#8e5548" stroke-width="2.2" fill="none"/>
    <ellipse cx="77" cy="290" rx="14" ry="5" fill="#be8c76" opacity="0.7"/>
  </g>
  <!-- shirt logo -->
  <g filter="url(#wb)"><path d="M117,329 q2.4,-5 4.4,-5.4 q1.8,2 -1.6,4.6" stroke="#e8e8f0" stroke-width="0.9" fill="none"/>
  <text x="122.6" y="329.2" font-size="4.4" font-weight="bold" font-style="italic" fill="#e8e8f0" textLength="14" lengthAdjust="spacingAndGlyphs">CATIA</text></g>
  </g>
</svg>
</body>
</html>
